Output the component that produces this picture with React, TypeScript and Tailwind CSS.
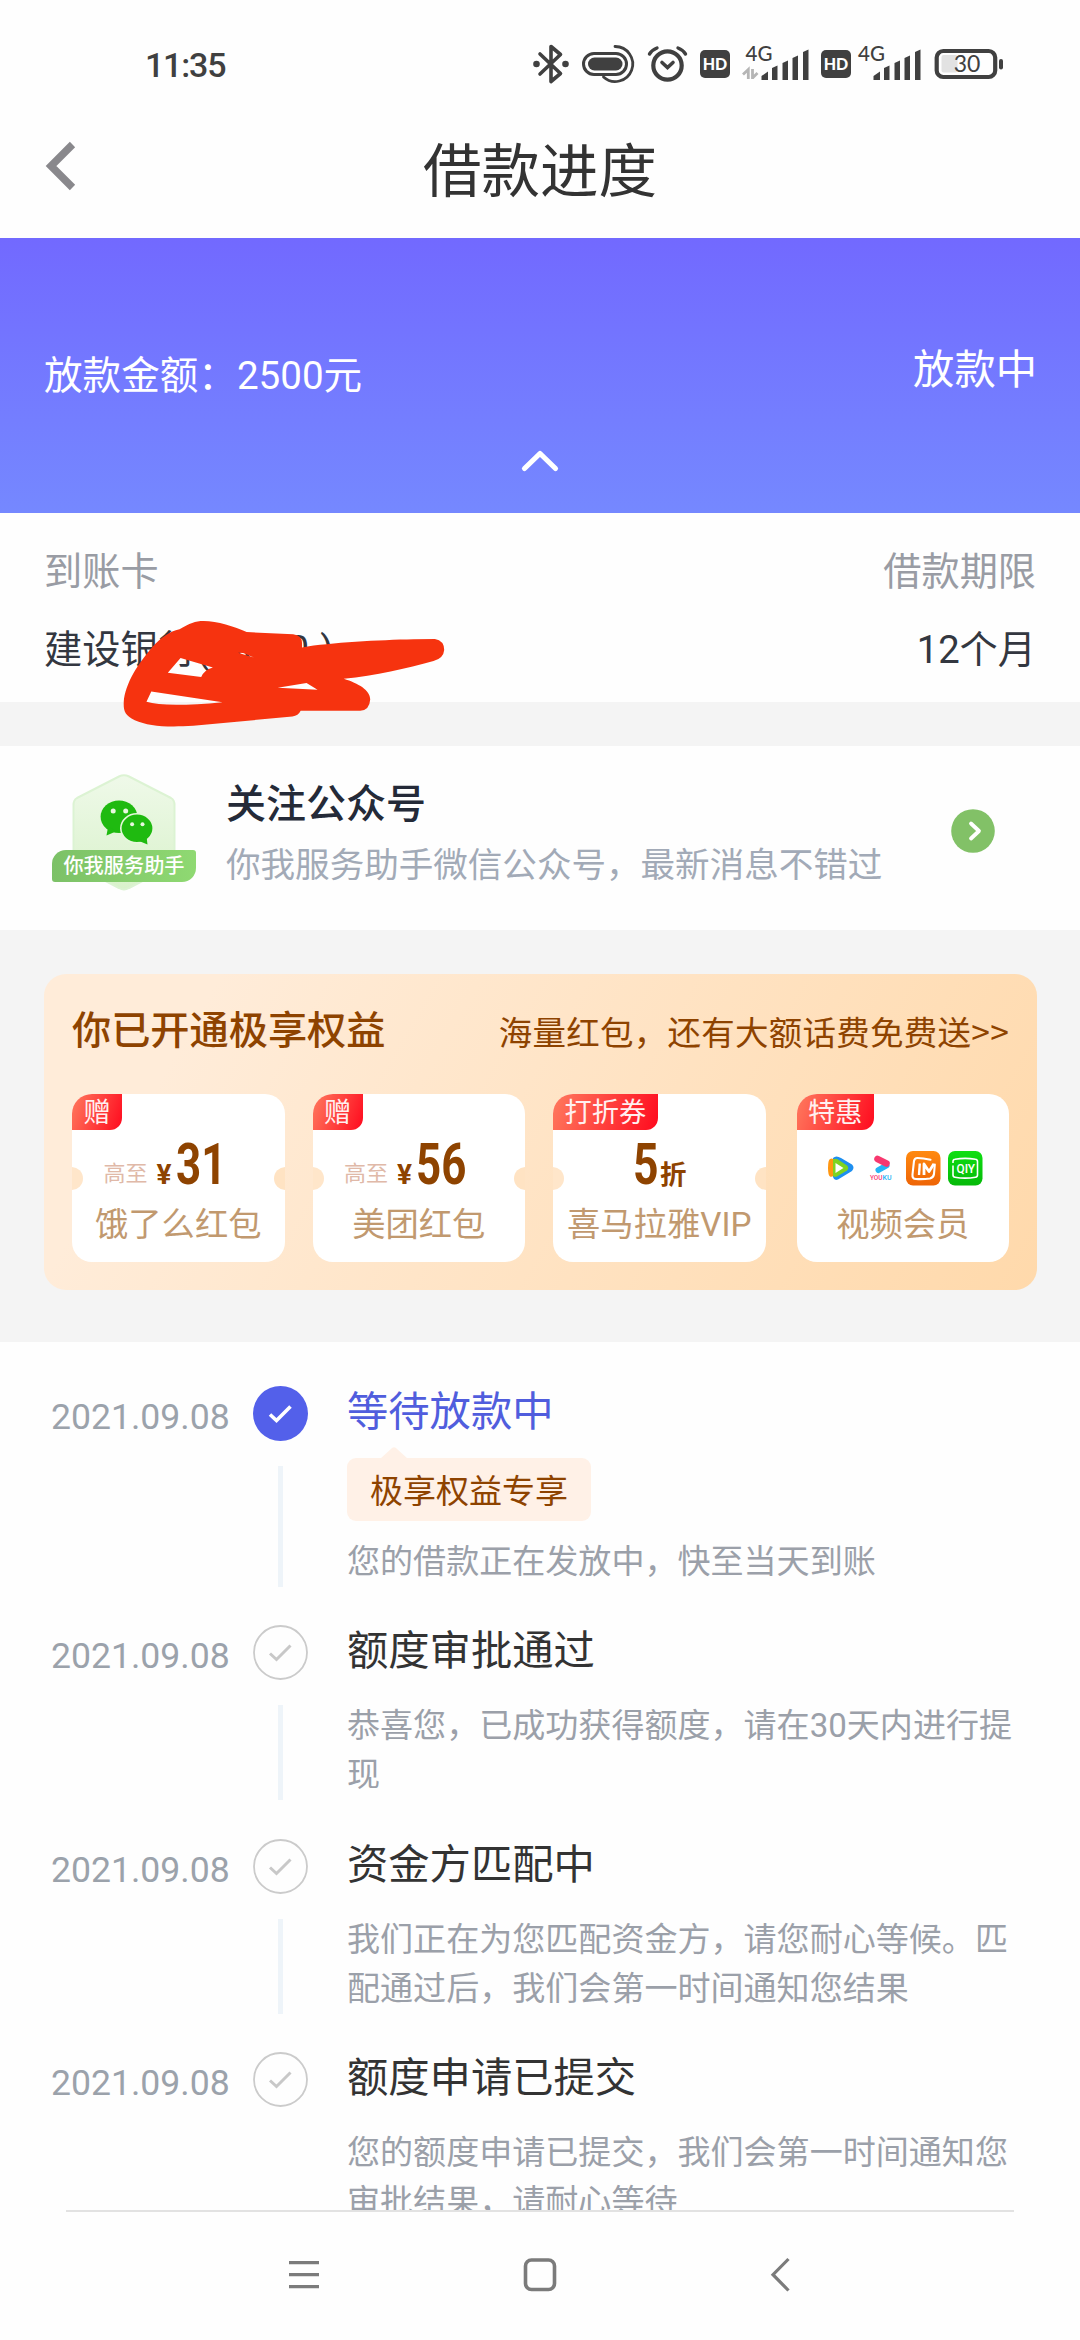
import React from "react";

const FONT = 'font-[Roboto,"Noto_Sans_CJK_SC",sans-serif]';

function StatusBar() {
  return (
    <div className="flex h-[106px] shrink-0 items-start justify-between pl-[145px] pr-[76px]">
      <span className="mt-[45px] text-[34px] font-medium leading-[41px] tracking-[-1.2px] text-[#404040]">11:35</span>
      <svg className="mt-[40px]" width="471" height="48" viewBox="533 40 471 48" fill="none" stroke="#404040">
        <path d="M540 54 L560.5 73.5 L551 81.5 V46.5 L560.5 54.5 L540 74" strokeWidth="3.6" strokeLinejoin="round" strokeLinecap="round" />
        <circle cx="536.5" cy="64" r="3.3" fill="#404040" stroke="none" />
        <circle cx="565.5" cy="64" r="3.3" fill="#404040" stroke="none" />
        <rect x="583.5" y="53.5" width="43" height="21" rx="10.5" strokeWidth="3" />
        <rect x="588" y="57.5" width="34.5" height="13" rx="6.5" fill="#404040" stroke="none" />
        <path d="M615 46.5 A17.5 17.5 0 1 1 603.5 77" strokeWidth="2.8" strokeLinecap="round" />
        <circle cx="667.5" cy="65.5" r="14.2" strokeWidth="4.2" />
        <path d="M662 62.5 L667.5 67.5 L673 62.5" strokeWidth="3.6" strokeLinecap="round" />
        <path d="M649.5 54 Q652 50 657 48 M685.5 54 Q683 50 678 48" strokeWidth="3.4" strokeLinecap="round" />
        <g fill="#404040" stroke="none">
          <rect x="700" y="50" width="30" height="28" rx="5" />
          <rect x="821" y="50" width="30" height="28" rx="5" />
        </g>
        <g fill="#fff" stroke="none" className="font-[Lato,sans-serif] text-[16px] font-black" textAnchor="middle">
          <text x="715" y="69.8">HD</text>
          <text x="836" y="69.8">HD</text>
        </g>
        <g fill="#404040" stroke="none" className="font-[Lato,sans-serif] text-[20.5px] font-medium">
          <text x="745.5" y="60.8">4G</text>
          <text x="858" y="60.8">4G</text>
        </g>
        <g fill="#404040" stroke="none">
          <path d="M761.500 80 v-4 l6.500 -4.500 v8.500z M772 80 v-12 l5.500 -2.500 v14.500z M782.500 80 v-17 l5.500 -2.500 v19.500z M792.500 80 v-22 l5.500 -2.500 v24.500z M803 80 v-28 l5.500 -2.500 v30.500z" />
          <path d="M873.500 80 v-4 l6.500 -4.500 v8.500z M884 80 v-12 l5.500 -2.500 v14.500z M894.500 80 v-17 l5.500 -2.500 v19.500z M904.500 80 v-22 l5.500 -2.500 v24.500z M915 80 v-28 l5.500 -2.500 v30.500z" />
        </g>
        <path d="M743 74.500 L748.300 69.500 V79 M752.500 79 V69 M752.500 78 L757.500 73" stroke="#b5b5b5" strokeWidth="2.8" />
        <rect x="941.500" y="55" width="16" height="17.500" rx="2" fill="#e2e2e2" stroke="none" />
        <rect x="936.700" y="51" width="58.500" height="26" rx="6.500" strokeWidth="4.200" />
        <path d="M1001 61 V67.500" strokeWidth="4" strokeLinecap="round" />
        <text x="967" y="72.300" textAnchor="middle" fill="#404040" stroke="none" className="font-[Lato,sans-serif] text-[23px]">30</text>
      </svg>
    </div>
  );
}

function TitleBar() {
  return (
    <div className="relative flex h-[132px] shrink-0 items-center justify-center">
      <svg className="absolute left-[44px] top-[34px]" width="34" height="52" viewBox="0 0 34 52" fill="none" stroke="#89888c" strokeWidth="7.500">
        <path d="M28.500 4.500 L7 26 L28.500 47.500" />
      </svg>
      <h1 className="text-[58.500px] leading-[80px] text-[#333]">借款进度</h1>
    </div>
  );
}

function AmountBanner() {
  return (
    <div className="flex h-[275px] shrink-0 flex-col bg-gradient-to-b from-[#7269ff] to-[#7588ff] text-white">
      <div className="flex items-start justify-between pl-[44px] pr-[43px] pt-[105px]">
        <span className="mt-[7px] text-[38.600px] leading-[52px]">放款金额：2500元</span>
        <span className="text-[41.300px] leading-[54px]">放款中</span>
      </div>
      <svg className="mx-auto mt-[46px]" width="40" height="26" viewBox="0 0 40 26" fill="none" stroke="#fff" strokeWidth="5.200" strokeLinecap="round" strokeLinejoin="round">
        <path d="M4.500 20.500 L20 5.500 L35.500 20.500" />
      </svg>
    </div>
  );
}

function Scribble() {
  return (
    <svg className="absolute left-[120.500px] top-[107px]" width="327" height="108.500" viewBox="350 330 950 325" preserveAspectRatio="none">
      <path
        fill="#f6330f"
        fillRule="evenodd"
        d="M590 333 C630 333 680 350 715 366 L850 373 Q876 376 876 400 L876 412 C960 398 1100 390 1200 388 L1262 387 Q1289 392 1289 420 Q1287 445 1258 453 C1180 475 1090 498 997 506 C1040 520 1074 540 1074 568 Q1072 600 1045 602 L872 602 Q865 617 848 619 L560 647 C480 652 430 648 390 630 C360 615 357 600 358 575 C362 520 400 460 440 412 C470 380 490 365 520 358 C550 340 565 333 590 333 Z M523 444 L486 488 L583 501 Q590 480 617 472 Z M438 544 L424 575 Q480 592 645 576 Z M690 428 L736 442 L705 429 Z M805 533 L921 539 L889 519 Z"
      />
    </svg>
  );
}

function LoanDetails() {
  return (
    <div className="relative h-[189px] shrink-0 bg-[#fefefe] pl-[44px] pr-[44px] pt-[33px]">
      <div className="flex justify-between text-[38.200px] leading-[52px] text-[#999ca4]">
        <span>到账卡</span>
        <span>借款期限</span>
      </div>
      <div className="mt-[26px] flex justify-between text-[38.200px] leading-[52px] text-[#333740]">
        <span>
          建设银行<span className="tracking-[0.800px]">( 0000 )</span>
        </span>
        <span>12个月</span>
      </div>
      <Scribble />
    </div>
  );
}

function WechatBadge() {
  return (
    <div className="relative h-[118px] w-[144px]">
      <svg width="144" height="118" viewBox="0 0 144 118">
        <defs>
          <linearGradient id="hex" x1="0" y1="0" x2="0" y2="1">
            <stop offset="0" stopColor="#eff9e9" />
            <stop offset="1" stopColor="#d9f2cb" />
          </linearGradient>
        </defs>
        <path d="M67 2.500 Q72 0 77 2.500 L119 24 Q122.500 26 122.500 31 V85 Q122.500 90 119 92 L77 114 Q72 117 67 114 L25 92 Q21.500 90 21.500 85 V31 Q21.500 26 25 24 Z" fill="url(#hex)" stroke="#dcf3d3" strokeWidth="2" />
        <g fill="#1fba10">
          <ellipse cx="67" cy="42.700" rx="18.400" ry="16.300" />
          <path d="M56 53 L54.500 61.500 L65 57 Z" />
          <ellipse cx="85" cy="54.300" rx="16.200" ry="14.500" stroke="#e6f7dc" strokeWidth="1.600" />
          <path d="M87 67 L95.500 70.500 L94.500 62 Z" />
        </g>
        <g fill="#e9f8e0">
          <circle cx="61.200" cy="37" r="2.500" />
          <circle cx="73.700" cy="37" r="2.500" />
          <circle cx="80.100" cy="50.300" r="2" />
          <circle cx="90.500" cy="50.300" r="2" />
        </g>
      </svg>
      <div className="absolute left-0 top-[76px] flex h-[32px] w-[144px] items-center justify-center rounded-[3px] rounded-br-[14px] rounded-tl-[14px] bg-gradient-to-r from-[#7cc167] to-[#8fd972] text-[20.200px] font-medium leading-[32px] text-white">
        你我服务助手
      </div>
    </div>
  );
}

function FollowCard() {
  return (
    <div className="mt-[44px] flex h-[184px] shrink-0 items-start bg-[#fefefe] pl-[52px] pr-[85px]">
      <div className="mt-[28px]">
        <WechatBadge />
      </div>
      <div className="ml-[30px] mt-[32px] flex-1">
        <div className="text-[40px] font-medium leading-[54px] text-[#242a38]">关注公众号</div>
        <div className="mt-[9px] text-[34.550px] leading-[48px] text-[#a2aab7]">你我服务助手微信公众号，最新消息不错过</div>
      </div>
      <svg className="mt-[63px]" width="44" height="44" viewBox="0 0 44 44" fill="none">
        <circle cx="22" cy="22" r="21.800" fill="#82c167" />
        <path d="M20 14.500 L28 22 L20 29.500" stroke="#fff" strokeWidth="3.800" strokeLinecap="round" strokeLinejoin="round" />
      </svg>
    </div>
  );
}

function Coupon({ tag, label, notch = true, children }: { tag: string; label: string; notch?: boolean; children: React.ReactNode }) {
  return (
    <div className="relative flex h-[168px] w-[212.500px] flex-col items-center overflow-hidden rounded-[20px] bg-white last:ml-auto">
      <div className="absolute left-0 top-0 h-[35.500px] rounded-br-[12px] bg-[linear-gradient(110deg,#ff7a5e,#ff0a1e)] px-[11.500px] text-[27.200px] leading-[38px] text-[#fff0f0]">
        {tag}
      </div>
      {notch && (
        <>
          <div className="absolute -left-[12px] top-[73px] size-[23px] rounded-full bg-[#ffe6ca]" />
          <div className="absolute -right-[12px] top-[73px] size-[23px] rounded-full bg-[#ffe3c3]" />
        </>
      )}
      <div className="h-[106px] w-full">{children}</div>
      <div className="whitespace-nowrap text-[33.300px] leading-[50px] text-[#c1996f]">{label}</div>
    </div>
  );
}

function Price({ value }: { value: string }) {
  return (
    <div className="flex h-[105px] items-baseline pl-[31.500px] pt-[41px] text-[#8e4300]">
      <span className="relative -top-[3px] text-[22px] leading-[60px] text-[#e0b9a8]">高至</span>
      <span className="ml-[9px] text-[28px] font-bold leading-[60px]">¥</span>
      <span className="ml-[4px] w-[48px] origin-left scale-x-[0.77] text-[57px] font-bold leading-[60px]">{value}</span>
    </div>
  );
}

function VideoLogos() {
  return (
    <svg className="absolute left-[30px] top-[57px]" width="156" height="35" viewBox="0 0 156 35">
      <defs>
        <linearGradient id="mango" x1="0" y1="0" x2="0" y2="1">
          <stop offset="0" stopColor="#ff8a10" />
          <stop offset="1" stopColor="#ee6406" />
        </linearGradient>
        <linearGradient id="iqiyi" x1="0" y1="0" x2="0" y2="1">
          <stop offset="0" stopColor="#0fdf12" />
          <stop offset="1" stopColor="#05b909" />
        </linearGradient>
      </defs>
      <path d="M6 7 Q9 4 14 7 L25 13.500 Q28 16.500 25 20 L11 28.500 Q7 30 6 26 Z" fill="#1e8ff0" />
      <path d="M3 8 Q1 9 1 17 Q1 24 3 25.500 Q5 26.500 8 24 V9 Q5 6.500 3 8 Z" fill="#ff9712" />
      <path d="M6 9 Q8 7 11 8.500 L20 14.500 Q22.500 17 20 19.500 L10 25.500 Q6 27 6 23 Z" fill="#7ed321" />
      <path d="M8.500 12 L16.500 17 L8.500 22 Z" fill="#fff" />
      <path d="M51.500 19 L59.500 14.500" stroke="#26b5f5" strokeWidth="6" strokeLinecap="round" />
      <path d="M50.500 8 L59.500 12.500" stroke="#f8386f" strokeWidth="6.500" strokeLinecap="round" />
      <g className="font-[Roboto,sans-serif] text-[6.500px] font-medium">
        <text x="43" y="28.800" fill="#f8386f" textLength="12.500" lengthAdjust="spacingAndGlyphs">YOU</text>
        <text x="55.500" y="28.800" fill="#26b5f5" textLength="9" lengthAdjust="spacingAndGlyphs">KU</text>
      </g>
      <rect x="79" y="0" width="34.500" height="34.500" rx="7" fill="url(#mango)" />
      <path d="M103.500 8.800 Q96 7 90.500 7 Q87.500 7 87 10 L85.500 23.500 Q85 28 89 28 Q96 28.500 103 27.500 Q106.500 26.500 107 23 L107.800 13.500" fill="none" stroke="#fff" strokeWidth="2.100" strokeLinecap="round" />
      <path d="M92 24 L92.800 12.500" fill="none" stroke="#fff" strokeWidth="2.400" />
      <path d="M97 24 V13 L102 20.500 L107 12.800" fill="none" stroke="#fff" strokeWidth="2.800" strokeLinejoin="round" />
      <rect x="121" y="0" width="34.500" height="34.500" rx="7" fill="url(#iqiyi)" />
      <path d="M126 12 V10.500 Q126 8.500 128 8.300 Q138 6.500 148.500 8.300 Q150.500 8.500 150.500 10.500 V24 Q150.500 26 148.500 26.300 Q138 28 128 26.300 Q126 26 126 24 V14.500" fill="none" stroke="#fff" strokeWidth="1.600" />
      <text x="138.800" y="22" textAnchor="middle" textLength="18.500" lengthAdjust="spacingAndGlyphs" fill="#fff" className="font-[Roboto,sans-serif] text-[13.500px] font-medium">QIY</text>
    </svg>
  );
}

function Benefits() {
  return (
    <div className="ml-[44px] mr-[43px] mt-[44px] h-[316px] shrink-0 rounded-[22px] bg-[linear-gradient(120deg,#ffecd9_15%,#ffd9ab)] pl-[28px] pr-[28px] pt-[32px] text-[#8e4300]">
      <div className="flex h-[50px] items-center justify-between whitespace-nowrap">
        <span className="text-[39.200px] font-medium leading-[50px]">你已开通极享权益</span>
        <span className="-mt-[1px] font-['Noto_Sans_CJK_SC',sans-serif] text-[33.500px] leading-[46px] tracking-[0.250px]">海量红包，还有大额话费免费送&gt;&gt;</span>
      </div>
      <div className="mt-[38px] flex gap-x-[28px]">
        <Coupon tag="赠" label="饿了么红包">
          <Price value="31" />
        </Coupon>
        <Coupon tag="赠" label="美团红包">
          <Price value="56" />
        </Coupon>
        <Coupon tag="打折券" label="喜马拉雅VIP">
          <div className="flex h-[105px] items-baseline pl-[80px] pt-[41px]">
            <span className="w-[27px] origin-left scale-x-[0.780] text-[57px] font-bold leading-[60px]">5</span>
            <span className="text-[26.500px] font-bold leading-[60px]">折</span>
          </div>
        </Coupon>
        <Coupon tag="特惠" label="视频会员" notch={false}>
          <VideoLogos />
        </Coupon>
      </div>
    </div>
  );
}

type Step = { title: string; desc: string; tag?: string; active?: boolean; item: string; line: string };

const STEPS: Step[] = [
  { title: "等待放款中", tag: "极享权益专享", desc: "您的借款正在发放中，快至当天到账", active: true, item: "h-[239px]", line: "h-[121px]" },
  { title: "额度审批通过", desc: "恭喜您，已成功获得额度，请在30天内进行提现", item: "h-[213.5px]", line: "h-[95px]" },
  { title: "资金方匹配中", desc: "我们正在为您匹配资金方，请您耐心等候。匹配通过后，我们会第一时间通知您结果", item: "h-[213.5px]", line: "h-[95px]" },
  { title: "额度申请已提交", desc: "您的额度申请已提交，我们会第一时间通知您审批结果，请耐心等待", item: "h-[213.5px]", line: "hidden" },
];

function TimelineItem({ step }: { step: Step }) {
  return (
    <div className={`flex shrink-0 items-start ${step.item}`}>
      <span className="w-[202px] text-[35.600px] leading-[63px] text-[#9ba2ab]">2021.09.08</span>
      <div className="flex w-[55px] flex-col items-center">
        <svg width="55" height="55" viewBox="0 0 55 55" fill="none">
          {step.active ? <circle cx="27.500" cy="27.500" r="27.500" fill="#5360ea" /> : <circle cx="27.500" cy="27.500" r="26.500" stroke="#cbcbcb" strokeWidth="1.800" />}
          <path d="M17 28.500 L23.500 34.500 L37.500 20.500" stroke={step.active ? "#fff" : "#c8c8c8"} strokeWidth={step.active ? 3.6 : 3} />
        </svg>
        <div className={`mt-[25px] w-[5px] bg-[#eef4f9] ${step.line}`} />
      </div>
      <div className="ml-[39px] w-[680px]">
        <div className={`text-[41.300px] leading-[52px] ${step.active ? "text-[#505ddd]" : "text-[#333]"}`}>{step.title}</div>
        {step.tag && (
          <div className="relative mt-[20px] h-[63px] w-[244px] rounded-[9px] bg-[#fff1e7] text-center text-[33px] leading-[67px] text-[#8e4300]">
            <svg className="absolute left-[33px] top-[-11px]" width="28" height="12" viewBox="0 0 28 12" fill="#fff1e7">
              <path d="M0 12 L12 1 Q14 -0.500 16 1 L28 12 Z" />
            </svg>
            {step.tag}
          </div>
        )}
        <p className={`text-[33.050px] leading-[49px] text-[#9ba0a9] ${step.tag ? "mt-[16px]" : "mt-[24px]"}`}>{step.desc}</p>
      </div>
    </div>
  );
}

function NavBar() {
  return (
    <div className="h-[130px] shrink-0 bg-[#fefefe]">
      <div className="mx-[66px] h-[2px] bg-[#e2e2e2]" />
      <div className="flex items-center pl-[287px] pt-[43px]">
        <svg width="34" height="40" viewBox="0 0 34 40" stroke="#7b7b7b" strokeWidth="3.200">
          <path d="M2 7.700 H32 M2 19.700 H32 M2 31.700 H32" />
        </svg>
        <svg className="ml-[201px]" width="36" height="40" viewBox="0 0 36 40" fill="none" stroke="#7b7b7b" strokeWidth="3.600">
          <rect x="3.500" y="5" width="29" height="29.500" rx="6" />
        </svg>
        <svg className="ml-[211px]" width="24" height="40" viewBox="0 0 24 40" fill="none" stroke="#7b7b7b" strokeWidth="3.200">
          <path d="M19.500 4 L4 19.700 L19.500 35.500" />
        </svg>
      </div>
    </div>
  );
}

export default function App() {
  return (
    <div className={`flex h-[2340px] w-[1080px] flex-col overflow-hidden bg-[#fefefe] ${FONT}`} lang="zh-CN">
      <StatusBar />
      <TitleBar />
      <AmountBanner />
      <div className="flex h-[829px] shrink-0 flex-col bg-[#f4f4f4]">
        <LoanDetails />
        <FollowCard />
        <Benefits />
      </div>
      <div className="flex h-[868px] shrink-0 flex-col overflow-hidden pl-[51px] pt-[44px]">
        {STEPS.map((s) => (
          <TimelineItem key={s.title} step={s} />
        ))}
      </div>
      <NavBar />
    </div>
  );
}
